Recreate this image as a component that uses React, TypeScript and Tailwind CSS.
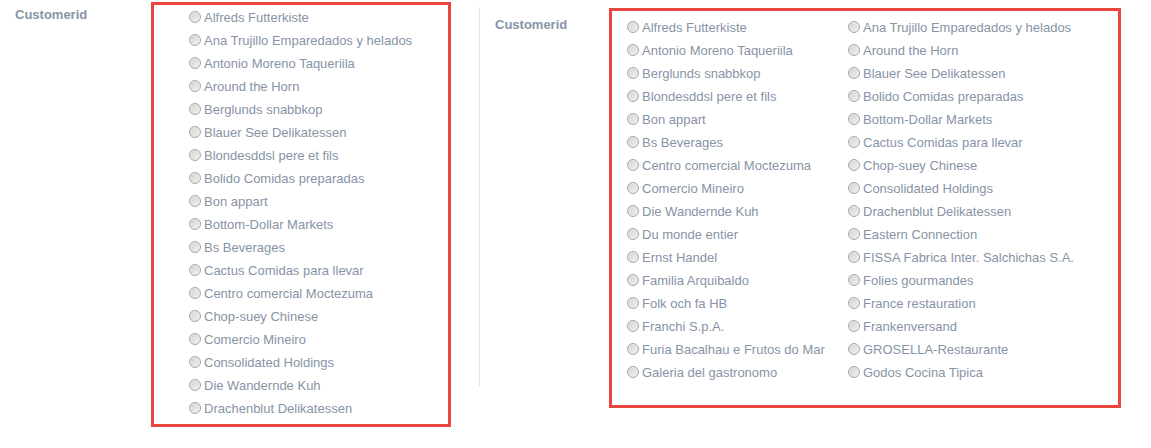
import React from "react";

const leftItems = [
  "Alfreds Futterkiste",
  "Ana Trujillo Emparedados y helados",
  "Antonio Moreno Taqueriila",
  "Around the Horn",
  "Berglunds snabbkop",
  "Blauer See Delikatessen",
  "Blondesddsl pere et fils",
  "Bolido Comidas preparadas",
  "Bon appart",
  "Bottom-Dollar Markets",
  "Bs Beverages",
  "Cactus Comidas para llevar",
  "Centro comercial Moctezuma",
  "Chop-suey Chinese",
  "Comercio Mineiro",
  "Consolidated Holdings",
  "Die Wandernde Kuh",
  "Drachenblut Delikatessen",
];

const rightItems = [
  "Alfreds Futterkiste",
  "Ana Trujillo Emparedados y helados",
  "Antonio Moreno Taqueriila",
  "Around the Horn",
  "Berglunds snabbkop",
  "Blauer See Delikatessen",
  "Blondesddsl pere et fils",
  "Bolido Comidas preparadas",
  "Bon appart",
  "Bottom-Dollar Markets",
  "Bs Beverages",
  "Cactus Comidas para llevar",
  "Centro comercial Moctezuma",
  "Chop-suey Chinese",
  "Comercio Mineiro",
  "Consolidated Holdings",
  "Die Wandernde Kuh",
  "Drachenblut Delikatessen",
  "Du monde entier",
  "Eastern Connection",
  "Ernst Handel",
  "FISSA Fabrica Inter. Salchichas S.A.",
  "Familia Arquibaldo",
  "Folies gourmandes",
  "Folk och fa HB",
  "France restauration",
  "Franchi S.p.A.",
  "Frankenversand",
  "Furia Bacalhau e Frutos do Mar",
  "GROSELLA-Restaurante",
  "Galeria del gastronomo",
  "Godos Cocina Tipica",
];

function Radio() {
  return (
    <span className="inline-block w-[12px] h-[12px] shrink-0 rounded-full border border-[#a7a7a7] bg-linear-to-br from-[#d2d2d2] to-[#f3f3f3] shadow-[inset_0_0_0_1px_#e9e9e9] mr-[3px] -mt-[1px]" />
  );
}

function Row({ label }: { label: string }) {
  return (
    <div className="flex items-center h-[23px] whitespace-nowrap">
      <Radio />
      <span>{label}</span>
    </div>
  );
}

export default function App() {
  return (
    <div className="flex items-start w-[1151px] h-[448px] bg-white text-[13px] leading-[15px] text-[#8793a6] font-['Liberation_Sans',Arial,sans-serif]">
      {/* Left form */}
      <div className="flex items-start">
        <div className="w-[151px] pl-[15px] pt-[7px] font-bold text-[#8894a6]">Customerid</div>
        <div className="mt-[2px] w-[300px] h-[425px] border-[3px] border-[#e8463e] pl-[35px] pt-[1px]">
          {leftItems.map((t) => (
            <Row key={t} label={t} />
          ))}
        </div>
      </div>

      {/* Separator */}
      <div className="ml-[28px] mt-[7px] w-px h-[379px] bg-[#e2e2e8]" />

      {/* Right form */}
      <div className="flex items-start ml-[15px]">
        <div className="w-[114px] pt-[17px] font-bold text-[#8894a6]">Customerid</div>
        <div className="mt-[8px] w-[512px] h-[400px] border-[3px] border-[#e8463e] pl-[15px] pt-[5px]">
          <div className="grid grid-cols-[221px_1fr]">
            {rightItems.map((t) => (
              <Row key={t} label={t} />
            ))}
          </div>
        </div>
      </div>
    </div>
  );
}
